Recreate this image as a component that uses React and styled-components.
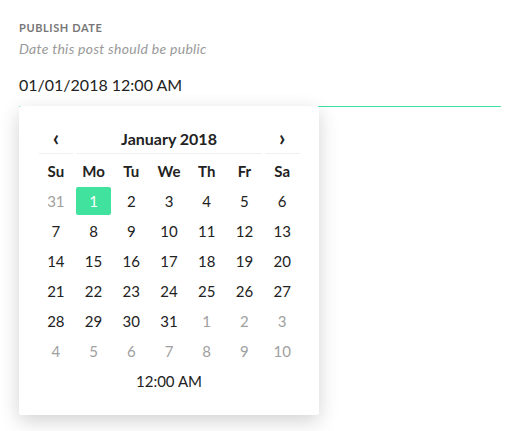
import styled, { createGlobalStyle } from 'styled-components';

const GlobalStyle = createGlobalStyle`
  html, body {
    margin: 0;
    padding: 0;
    background: #ffffff;
  }
  body {
    font-family: 'Lato', 'Noto Sans', sans-serif;
    color: #222222;
  }
`;

const Page = styled.div`
  box-sizing: border-box;
  min-height: 431px;
  padding: 20px 19px 0 19px;
  width: 520px;
`;

const Field = styled.div`
  position: relative;
`;

const Label = styled.div`
  font-size: 11px;
  font-weight: 700;
  letter-spacing: 0.6px;
  line-height: 16px;
  color: #777777;
  text-transform: uppercase;
`;

const Hint = styled.div`
  margin-top: 4px;
  font-size: 14px;
  font-style: italic;
  letter-spacing: 0.3px;
  line-height: 18px;
  color: #999999;
`;

const Input = styled.div`
  margin-top: 17px;
  padding-bottom: 11px;
  font-size: 16px;
  line-height: 20px;
  color: #222222;
  border-bottom: 1px solid #3fe2a0;
`;

const Picker = styled.div`
  position: absolute;
  left: 0;
  top: 100%;
  margin-top: -1px;
  width: 300px;
  box-sizing: border-box;
  padding: 18px 18px 19px 18px;
  background: #ffffff;
  box-shadow: 0 6px 20px rgba(0, 0, 0, 0.18);
  border-radius: 2px;
`;

const Grid = styled.div`
  display: grid;
  grid-template-columns: repeat(7, 1fr);
`;

const HeadCell = styled.div`
  grid-column: span ${(p) => p.$span || 1};
  margin: 0 1.5px;
  height: 30px;
  display: flex;
  align-items: center;
  justify-content: center;
  border-bottom: 1px solid #f0f0f0;
  font-size: ${(p) => (p.$arrow ? '22px' : '16px')};
  font-weight: 700;
  color: #222222;
  box-sizing: border-box;
  padding-bottom: ${(p) => (p.$arrow ? '3px' : '0')};
`;

const DowCell = styled.div`
  height: 30px;
  margin-top: 2px;
  display: flex;
  align-items: center;
  justify-content: center;
  font-size: 15px;
  font-weight: 700;
  color: #222222;
`;

const DayCell = styled.div`
  height: 28px;
  margin: 1px 1.5px;
  display: flex;
  align-items: center;
  justify-content: center;
  font-size: 15px;
  border-radius: 2px;
  color: ${(p) => (p.$active ? '#ffffff' : p.$muted ? '#a0a0a0' : '#222222')};
  background: ${(p) => (p.$active ? '#41e29e' : 'transparent')};
`;

const Time = styled.div`
  height: 30px;
  display: flex;
  align-items: center;
  justify-content: center;
  font-size: 15px;
  color: #222222;
`;

const dows = ['Su', 'Mo', 'Tu', 'We', 'Th', 'Fr', 'Sa'];

const days = [];
days.push({ n: 31, muted: true });
for (let i = 1; i <= 31; i++) days.push({ n: i });
for (let i = 1; i <= 10; i++) days.push({ n: i, muted: true });

export default function App() {
  return (
    <>
      <GlobalStyle />
      <Page>
        <Field>
          <Label>Publish Date</Label>
          <Hint>Date this post should be public</Hint>
          <Input>01/01/2018 12:00 AM</Input>
          <Picker>
            <Grid>
              <HeadCell $arrow>‹</HeadCell>
              <HeadCell $span={5}>January 2018</HeadCell>
              <HeadCell $arrow>›</HeadCell>
              {dows.map((d) => (
                <DowCell key={d}>{d}</DowCell>
              ))}
              {days.map((d, i) => (
                <DayCell key={i} $muted={d.muted} $active={!d.muted && d.n === 1}>
                  {d.n}
                </DayCell>
              ))}
            </Grid>
            <Time>12:00 AM</Time>
          </Picker>
        </Field>
      </Page>
    </>
  );
}
